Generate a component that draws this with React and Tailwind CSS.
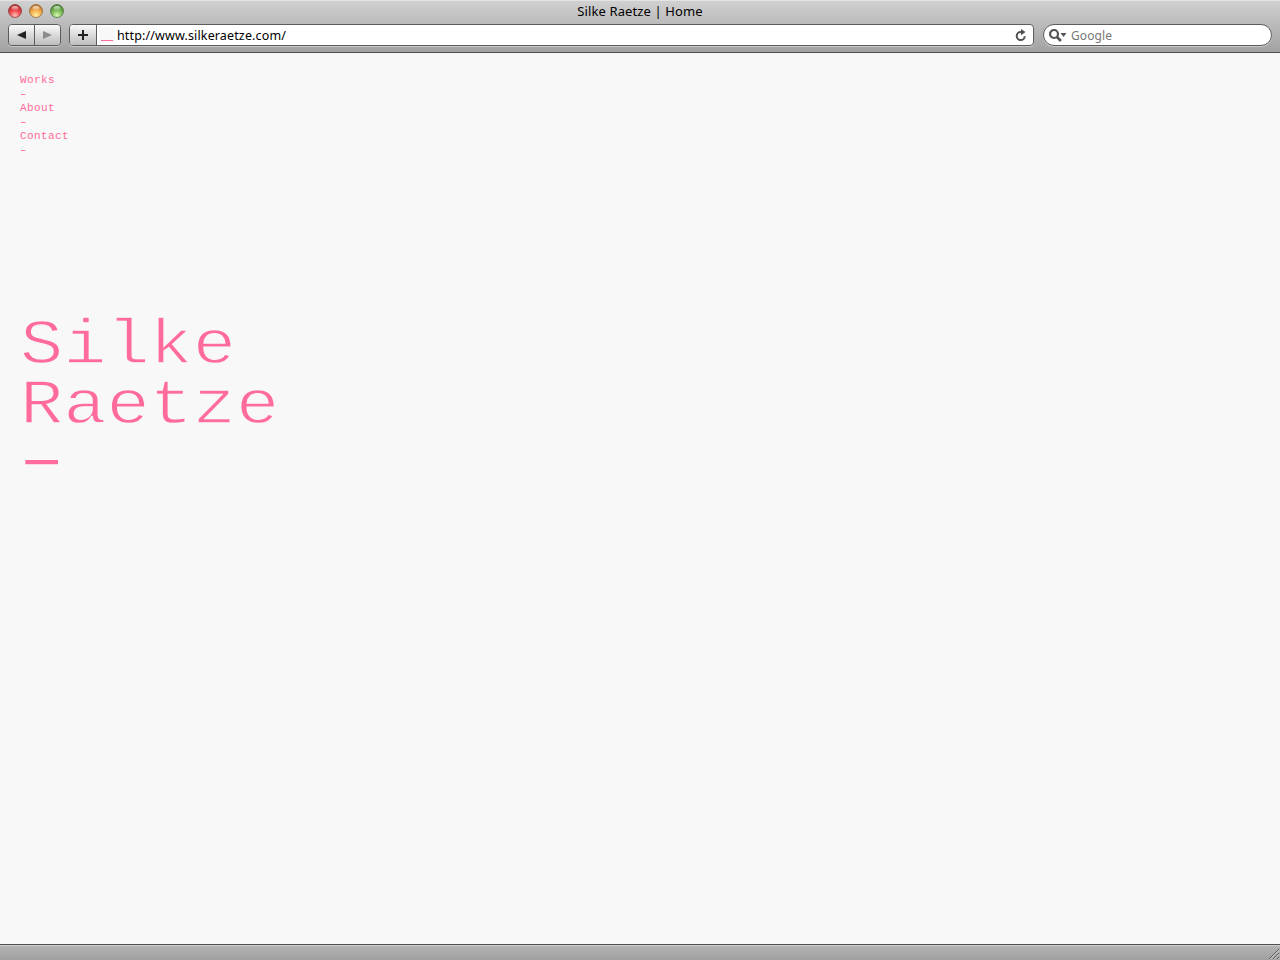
const CHROME_FONT = "font-['Lucida_Grande','Noto_Sans',sans-serif]";

function Light({ id, rim, dark, mid, glow }) {
  return (
    <svg width="14" height="14" viewBox="0 0 14 14">
      <defs>
        <radialGradient id={id} cx="50%" cy="85%" r="80%">
          <stop offset="0" stopColor={glow} />
          <stop offset="0.5" stopColor={mid} />
          <stop offset="1" stopColor={dark} />
        </radialGradient>
        <linearGradient id={`${id}-shine`} x1="0" y1="0" x2="0" y2="1">
          <stop offset="0" stopColor="#fff" stopOpacity="0.75" />
          <stop offset="1" stopColor="#fff" stopOpacity="0.15" />
        </linearGradient>
      </defs>
      <circle cx="7" cy="7" r="6.5" fill={`url(#${id})`} stroke={rim} strokeWidth="0.8" />
      <ellipse cx="7" cy="3.9" rx="3.4" ry="2" fill={`url(#${id}-shine)`} />
    </svg>
  );
}

function TitleBar() {
  return (
    <div className="relative flex h-6 items-start pt-1 pl-2">
      <div className="flex gap-[7px]">
        <Light id="close" rim="#8a4040" dark="#b3262a" mid="#f14a4e" glow="#ffc2bd" />
        <Light id="minimize" rim="#94683f" dark="#c0702a" mid="#f5b04f" glow="#fff3a0" />
        <Light id="zoom" rim="#4e7340" dark="#47842f" mid="#80bd5a" glow="#dcfab8" />
      </div>
      <div className="absolute inset-x-0 top-[3px] text-center text-[13px] leading-4 text-black">
        <span className="whitespace-nowrap tracking-[0.11px]">Silke Raetze | Home</span>
      </div>
    </div>
  );
}

function Toolbar() {
  const button = "flex items-center justify-center bg-linear-to-b from-[#fafafa] to-[#bdbdbd]";
  return (
    <div className="flex h-[22px] items-stretch pr-2 pl-2">
      <div className="flex w-[53px] overflow-hidden rounded-[4px] border border-[#5c5c5c] shadow-[0_1px_0_#c8c8c8]">
        <button className={`${button} w-[26px] border-r border-[#5c5c5c]`}>
          <svg width="9" height="8" viewBox="0 0 9 8"><path d="M9 0V8L0 4Z" fill="#222" /></svg>
        </button>
        <button className={`${button} flex-1`}>
          <svg width="9" height="8" viewBox="0 0 9 8"><path d="M0 0V8L9 4Z" fill="#8b8b8b" /></svg>
        </button>
      </div>
      <div className="ml-2 flex w-[965px] overflow-hidden rounded-[4px] border border-[#5c5c5c] bg-white shadow-[0_1px_0_#c8c8c8]">
        <button className={`${button} w-[27px] border-r border-[#5c5c5c]`}>
          <svg width="10" height="10" viewBox="0 0 10 10"><path d="M5 0V10M0 5H10" stroke="#222" strokeWidth="2" /></svg>
        </button>
        <div className="flex flex-1 items-center pr-[6px] pl-[2px]">
          <svg width="16" height="16" viewBox="0 0 16 16">
            <path fill="#f8f8f8" d="M0 0H16V16H0Z" />
            <path fill="#ff6b9a" d="M2 13H14V14H2Z" />
          </svg>
          <span className="ml-[2px] flex-1 pt-px text-[12.5px] leading-4 tracking-[0.14px] whitespace-nowrap text-black">http://www.silkeraetze.com/</span>
          <svg width="12" height="13" viewBox="0 0 12 13">
            <path d="M7.2 3H5.7A4 4 0 1 0 9.7 7.2" fill="none" stroke="#505050" strokeWidth="2" />
            <path d="M6 0L10.5 3.1L6 6.3Z" fill="#505050" />
          </svg>
        </div>
      </div>
      <div className="ml-[9px] flex flex-1 items-center rounded-full border border-[#5c5c5c] bg-white pl-[5px] shadow-[0_1px_0_#c8c8c8]">
        <svg width="18" height="13" viewBox="0 0 18 13">
          <circle cx="5" cy="5" r="4" fill="none" stroke="#555" strokeWidth="2.2" />
          <path d="M7.8 7.8L11.9 12" stroke="#555" strokeWidth="2.7" />
          <path d="M11.5 4H17.5L14.5 8Z" fill="#555" />
        </svg>
        <span className="ml-1 pt-px text-[12px] leading-4 tracking-[0.1px] text-[#777]">Google</span>
      </div>
    </div>
  );
}

function MenuDash() {
  return <span className="w-[7px] scale-x-150">-</span>;
}

export default function App() {
  return (
    <div className={`flex h-[960px] w-[1280px] flex-col overflow-hidden bg-[#f8f8f8] ${CHROME_FONT}`}>
      <header className="h-[53px] shrink-0 border-t border-b border-t-[#e2e2e2] border-b-[#4f4f4f] bg-linear-to-b from-[#d0d0d0] to-[#a2a2a2]">
        <div className="-mt-px">
          <TitleBar />
          <Toolbar />
        </div>
      </header>
      <main className="flex-1 pl-5 font-['Courier_New','Liberation_Mono',monospace] text-[#ff6b9a]">
        <nav className="mt-5 flex h-[84px] flex-col text-[11px] leading-[14px] tracking-[0.4px]">
          <a>Works</a>
          <MenuDash />
          <a>About</a>
          <MenuDash />
          <a>Contact</a>
          <MenuDash />
        </nav>
        <h1 className="mt-[155px] text-[72px] leading-[60px] [-webkit-text-stroke:1.5px_#f8f8f8]">
          <span className="block origin-[0_66px] scale-y-[0.88]">Silke</span>
          <span className="block origin-[0_66px] scale-y-[0.88]">Raetze</span>
          <span className="block w-[43px] scale-x-[1.8]">-</span>
        </h1>
      </main>
      <footer className="flex h-4 shrink-0 items-end justify-end border-t border-[#4f4f4f] bg-linear-to-b from-[#b4b4b4] to-[#a0a0a0] shadow-[inset_0_1px_0_#cfcfcf]">
        <svg width="12" height="12" viewBox="0 0 12 12">
          <path d="M1 11L11 1M5 11L11 5M9 11L11 9" stroke="#585858" strokeWidth="1" />
          <path d="M2 11.4L11.4 2M6 11.4L11.4 6M10 11.4L11.4 10" stroke="#dedede" strokeWidth="0.8" />
        </svg>
      </footer>
    </div>
  );
}
